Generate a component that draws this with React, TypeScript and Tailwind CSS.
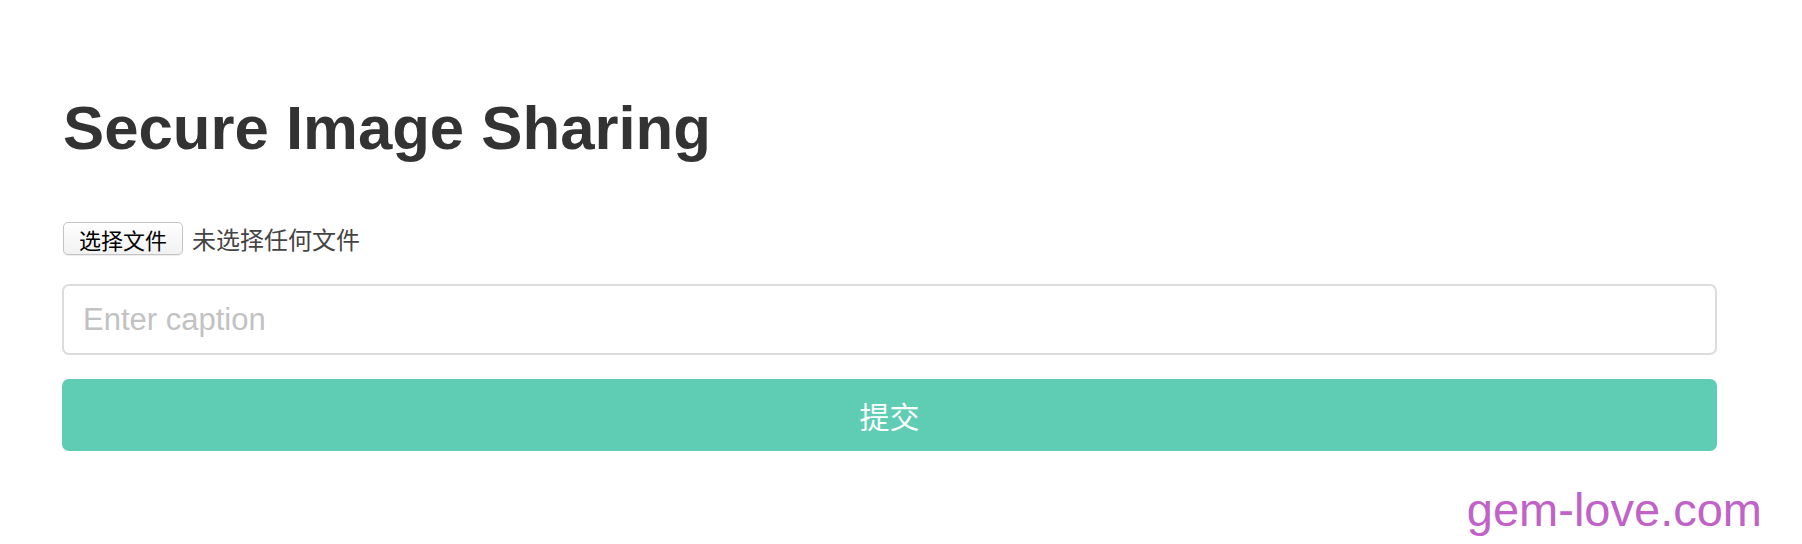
// Secure Image Sharing 업로드 폼

import { useState } from "react";

export default function App() {
  const [fileName, setFileName] = useState<string | null>(null);
  const [caption, setCaption] = useState("");

  return (
    <div className="relative h-[544px] w-full overflow-hidden bg-white font-['Liberation_Sans','Noto_Sans_CJK_SC',sans-serif]">
      <div className="ml-[62px] w-[1655px] pt-[95px]">
        {/* 제목 */}
        <h1 className="pl-[1px] text-[61.7px] leading-[66px] font-bold text-[#333333]">
          Secure Image Sharing
        </h1>

        {/* 파일 선택 */}
        <label className="mt-[61px] flex h-[33px] cursor-pointer items-center gap-[9px] pl-px">
          <input
            type="file"
            className="hidden"
            onChange={(e) => setFileName(e.target.files?.[0]?.name ?? null)}
          />
          <span className="flex h-[33px] w-[120px] items-center justify-center rounded-[5px] border border-[#c4c4c4] bg-gradient-to-b from-white to-[#f1f1f1] font-['Noto_Sans_CJK_SC',sans-serif] text-[22px] leading-none text-black shadow-[0_1px_1px_rgba(0,0,0,0.08)]">
            选择文件
          </span>
          <span className="font-['Noto_Sans_CJK_SC',sans-serif] text-[24px] leading-none text-[#444444]">
            {fileName ?? "未选择任何文件"}
          </span>
        </label>

        {/* 캡션 입력 */}
        <input
          type="text"
          value={caption}
          onChange={(e) => setCaption(e.target.value)}
          placeholder="Enter caption"
          className="mt-[29px] block h-[71px] w-full rounded-[7px] border-2 border-[#dcdcdc] px-[19px] text-[31px] text-[#333333] outline-none placeholder:text-[#c2c2c2]"
        />

        {/* 제출 버튼 */}
        <button
          type="button"
          className="mt-[24px] flex h-[72px] w-full items-center justify-center rounded-[7px] bg-[#5ecdb3] font-['Noto_Sans_CJK_SC',sans-serif] text-[30px] leading-none text-white"
        >
          提交
        </button>
      </div>

      {/* 워터마크 */}
      <div className="absolute right-[40px] bottom-[11px] text-[47px] leading-[47px] text-[#c062c8]">
        gem-love.com
      </div>
    </div>
  );
}
